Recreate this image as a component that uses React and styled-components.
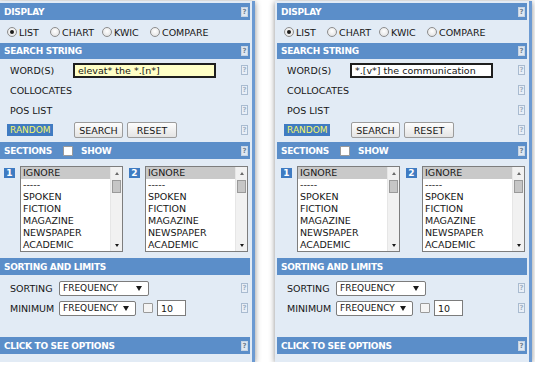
import React from "react";
import styled, { createGlobalStyle, css } from "styled-components";

const Global = createGlobalStyle`
  html, body { margin: 0; padding: 0; background: #ffffff; overflow: hidden; }
  body { font-family: "DejaVu Sans", Verdana, sans-serif; font-size: 9.5px; color: #161616; }
`;

const Page = styled.div`
  display: flex;
  gap: 20px;
  padding-top: 1px;
  margin-left: -2px;
  width: 560px;
`;

const Panel = styled.div`
  width: 250px;
  padding: 2px 2px 8px 2px;
  background: #e2ebf5;
  border-right: 3px solid #6c9ad2;
  box-shadow: 0 1px 6px rgba(0, 0, 0, 0.45);
  display: flex;
  flex-direction: column;
`;

const Header = styled.div`
  height: ${(p) => p.$h || 17}px;
  background: #5b8ec9;
  color: #ffffff;
  font-size: 9px;
  font-weight: bold;
  letter-spacing: -0.3px;
  display: flex;
  align-items: center;
  padding-left: 4px;
  gap: 4px;
`;

const HelpBox = styled.span`
  margin-left: auto;
  margin-right: 2px;
  width: 5px;
  height: 8px;
  font-size: 7px;
  line-height: 8px;
  font-weight: bold;
  text-align: center;
  letter-spacing: 0;
  ${(p) =>
    p.$header
      ? css`
          background: #dfe8f2;
          color: #6f7f90;
          border: 1px solid #c7d4e3;
        `
      : css`
          background: #e9eff7;
          color: #9fb1c5;
          border: 1px solid #a9bbd0;
        `}
`;

const Help = ({ header }) => <HelpBox $header={header}>?</HelpBox>;

const RadioRow = styled.div`
  height: 23px;
  display: flex;
  align-items: center;
  padding-left: 7px;
  padding-top: 1px;
  box-sizing: border-box;
`;

const RadioOpt = styled.label`
  display: flex;
  align-items: center;
  gap: 2px;
  width: ${(p) => p.$w}px;
`;

const RadioDot = styled.span`
  width: 8px;
  height: 8px;
  border-radius: 50%;
  border: 1px solid #8d8d8d;
  background: radial-gradient(circle at 50% 40%, #ffffff, #dcdcdc);
  display: flex;
  align-items: center;
  justify-content: center;
  &::after {
    content: "";
    width: 4px;
    height: 4px;
    border-radius: 50%;
    background: ${(p) => (p.$on ? "#1c1c1c" : "transparent")};
  }
`;

const Body = styled.div`
  height: ${(p) => p.$h}px;
  padding-top: ${(p) => p.$pt || 0}px;
  box-sizing: border-box;
  display: flex;
  flex-direction: column;
`;

const Row = styled.div`
  height: 20px;
  display: flex;
  align-items: center;
  padding-left: ${(p) => (p.$pl != null ? p.$pl : 10)}px;
`;

const Label = styled.span`
  width: ${(p) => p.$w}px;
  flex-shrink: 0;
`;

const WordInput = styled.div`
  width: 136px;
  height: 11px;
  border: 2px solid #1e1e1e;
  background: ${(p) => p.$bg};
  padding-left: 3px;
  display: flex;
  align-items: center;
  white-space: nowrap;
  overflow: hidden;
`;

const Random = styled.span`
  width: 46px;
  height: 12px;
  background: #3f7bc2;
  color: #f2f46a;
  display: flex;
  align-items: center;
  padding-left: 3px;
  box-sizing: border-box;
  margin-right: ${(p) => p.$mr}px;
  font-size: 9px;
`;

const Button = styled.span`
  height: 14px;
  width: ${(p) => p.$w}px;
  border: 1px solid #9c9c9c;
  border-radius: 2px;
  background: linear-gradient(#fdfdfd, #e4e4e4);
  display: flex;
  align-items: center;
  justify-content: center;
  margin-right: 4px;
`;

const Check = styled.span`
  width: 8px;
  height: 8px;
  border: 1px solid #9a9a9a;
  border-radius: 1px;
  background: ${(p) => (p.$light ? "#f4f4f4" : "#ffffff")};
  margin: ${(p) => p.$m};
`;

const Sections = styled.div`
  height: 99px;
  padding: 7px 0 0 4px;
  box-sizing: border-box;
  display: flex;
  align-items: flex-start;
`;

const Badge = styled.span`
  width: 11px;
  height: 10px;
  margin-top: 2px;
  margin-right: ${(p) => p.$mr}px;
  background: #3f7bc2;
  color: #ffffff;
  font-weight: bold;
  font-size: 9px;
  display: flex;
  align-items: center;
  justify-content: center;
`;

const ListBox = styled.div`
  width: 101px;
  height: 84px;
  border: 1px solid #7d7d7d;
  background: #ffffff;
  display: flex;
  margin-right: ${(p) => p.$mr}px;
`;

const Items = styled.div`
  flex: 1;
  display: flex;
  flex-direction: column;
`;

const Item = styled.div`
  height: 12px;
  line-height: 12px;
  padding-left: 2px;
  background: ${(p) => (p.$sel ? "#c9c9c9" : "transparent")};
`;

const Scroll = styled.div`
  width: 11px;
  background: #f1f1f1;
  border-left: 1px solid #e6e6e6;
  display: flex;
  flex-direction: column;
  align-items: center;
`;

const ArrowBox = styled.div`
  height: 12px;
  width: 11px;
  display: flex;
  align-items: center;
  justify-content: center;
`;

const Tri = styled.span`
  width: 0;
  height: 0;
  flex-shrink: 0;
  border-left: ${(p) => (p.$big ? 3 : 2.5)}px solid transparent;
  border-right: ${(p) => (p.$big ? 3 : 2.5)}px solid transparent;
  ${(p) =>
    p.$up
      ? css`border-bottom: 3px solid ${p.$c || "#5a5a5a"};`
      : css`border-top: ${p.$big ? 5 : 3}px solid ${p.$c || "#1a1a1a"};`}
`;

const Thumb = styled.div`
  width: 9px;
  height: 13px;
  margin-top: 1px;
  background: #c6c6c6;
  border: 1px solid #9a9a9a;
  box-sizing: border-box;
`;

const Track = styled.div`
  flex: 1;
`;

const Select = styled.div`
  width: ${(p) => p.$w}px;
  height: 13px;
  border: 1px solid #7c7c7c;
  border-radius: 2px;
  background: #ffffff;
  display: flex;
  align-items: center;
  padding: 0 6px 0 3px;
  box-sizing: content-box;
  font-size: 9px;
  white-space: nowrap;
  justify-content: space-between;
`;

const SmallInput = styled.div`
  width: 24px;
  height: 14px;
  border: 1px solid #7c7c7c;
  background: #ffffff;
  padding-left: 3px;
  display: flex;
  align-items: center;
`;

const Spacer = styled.div`
  flex: 1;
`;

const sections = ["IGNORE", "-----", "SPOKEN", "FICTION", "MAGAZINE", "NEWSPAPER", "ACADEMIC"];

const List = ({ mr }) => (
  <ListBox $mr={mr}>
    <Items>
      {sections.map((s, i) => (
        <Item key={s} $sel={i === 0}>
          {s}
        </Item>
      ))}
    </Items>
    <Scroll>
      <ArrowBox>
        <Tri $up $c="#6a6a6a" />
      </ArrowBox>
      <Thumb />
      <Track />
      <ArrowBox>
        <Tri />
      </ArrowBox>
    </Scroll>
  </ListBox>
);

const radios = [
  { t: "LIST", w: 43, on: true },
  { t: "CHART", w: 52 },
  { t: "KWIC", w: 48 },
  { t: "COMPARE", w: 60 },
];

const SearchPanel = ({ word, bg }) => (
  <Panel>
    <Header>
      DISPLAY
      <Help header />
    </Header>
    <RadioRow>
      {radios.map((r) => (
        <RadioOpt key={r.t} $w={r.w}>
          <RadioDot $on={r.on} />
          {r.t}
        </RadioOpt>
      ))}
    </RadioRow>
    <Header $h={16}>
      SEARCH STRING
      <Help header />
    </Header>
    <Body $h={83} $pt={1}>
      <Row>
        <Label $w={63}>WORD(S)</Label>
        <WordInput $bg={bg}>{word}</WordInput>
        <Help />
      </Row>
      <Row>
        <Label $w={63}>COLLOCATES</Label>
        <Help />
      </Row>
      <Row>
        <Label $w={63}>POS LIST</Label>
        <Help />
      </Row>
      <Row $pl={7}>
        <Random $mr={21}>RANDOM</Random>
        <Button $w={47}>SEARCH</Button>
        <Button $w={48}>RESET</Button>
        <Help />
      </Row>
    </Body>
    <Header>
      SECTIONS
      <Check $m="0 4px 0 7px" />
      SHOW
      <Help header />
    </Header>
    <Sections>
      <Badge $mr={5}>1</Badge>
      <List mr={6} />
      <Badge $mr={5}>2</Badge>
      <List mr={0} />
    </Sections>
    <Header>SORTING AND LIMITS</Header>
    <Body $h={62} $pt={3}>
      <Row>
        <Label $w={49}>SORTING</Label>
        <Select $w={79}>
          FREQUENCY
          <Tri $big />
        </Select>
        <Help />
      </Row>
      <Row>
        <Label $w={49}>MINIMUM</Label>
        <Select $w={66}>
          FREQUENCY
          <Tri $big />
        </Select>
        <Check $light $m="0 4px 0 7px" />
        <SmallInput>10</SmallInput>
        <Help />
      </Row>
      <Spacer />
    </Body>
    <Header>
      CLICK TO SEE OPTIONS
      <Help header />
    </Header>
  </Panel>
);

export default function App() {
  return (
    <>
      <Global />
      <Page>
        <SearchPanel word={'elevat* the *.[n*]'} bg="#ffffc6" />
        <SearchPanel word={'*.[v*] the communication'} bg="#ffffff" />
      </Page>
    </>
  );
}
